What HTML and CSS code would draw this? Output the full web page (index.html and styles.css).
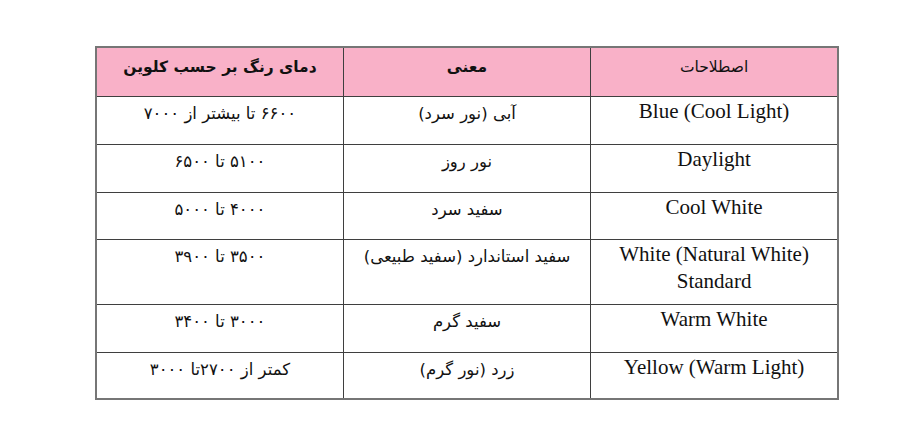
FILE: index.html
```html
<!DOCTYPE html>
<html lang="fa">
<head>
<meta charset="utf-8">
<title>دمای رنگ</title>
<link rel="stylesheet" href="styles.css">
</head>
<body>
<div class="page">
  <table class="grid" dir="rtl">
    <colgroup><col class="c"><col class="c"><col class="c"></colgroup>
    <thead>
      <tr class="head">
        <th class="fa light">اصطلاحات</th>
        <th class="fa">معنی</th>
        <th class="fa">دمای رنگ بر حسب کلوین</th>
      </tr>
    </thead>
    <tbody>
      <tr class="r48">
        <td class="en" dir="ltr">Blue (Cool Light)</td>
        <td class="fa">آبی (نور سرد)</td>
        <td class="fa">۶۶۰۰ تا بیشتر از ۷۰۰۰</td>
      </tr>
      <tr class="r48">
        <td class="en" dir="ltr">Daylight</td>
        <td class="fa">نور روز</td>
        <td class="fa">۵۱۰۰ تا ۶۵۰۰</td>
      </tr>
      <tr class="r47">
        <td class="en" dir="ltr">Cool White</td>
        <td class="fa">سفید سرد</td>
        <td class="fa">۴۰۰۰ تا ۵۰۰۰</td>
      </tr>
      <tr class="tall">
        <td class="en" dir="ltr">White (Natural White)<br>Standard</td>
        <td class="fa">سفید استاندارد (سفید طبیعی)</td>
        <td class="fa">۳۵۰۰ تا ۳۹۰۰</td>
      </tr>
      <tr class="r48">
        <td class="en" dir="ltr">Warm White</td>
        <td class="fa">سفید گرم</td>
        <td class="fa">۳۰۰۰ تا ۳۴۰۰</td>
      </tr>
      <tr class="r47">
        <td class="en" dir="ltr">Yellow (Warm Light)</td>
        <td class="fa">زرد (نور گرم)</td>
        <td class="fa">کمتر از ۲۷۰۰تا ۳۰۰۰</td>
      </tr>
    </tbody>
  </table>
</div>
</body>
</html>
```

FILE: styles.css
```css
html, body {
  margin: 0;
  padding: 0;
  background: #ffffff;
}

.page {
  padding: 46px 0 0 95px;
}

.grid {
  width: 744px;
  border-collapse: collapse;
  table-layout: fixed;
  border: 2px solid #767676;
  color: #111111;
}

.grid .c {
  width: 33.333%;
}

.grid th,
.grid td {
  border: 1px solid #3f3f3f;
  text-align: center;
  vertical-align: top;
  padding: 0 4px;
  box-sizing: border-box;
}

.head th {
  background: #f9b1c8;
  height: 49px;
  padding-top: 7px;
}

.grid tr.r48 td {
  height: 48px;
}

.grid tr.r47 td {
  height: 47px;
}

.grid tr.tall td {
  height: 65px;
}

.fa {
  font-family: "DejaVu Sans", "Noto Sans", sans-serif;
  font-size: 16.5px;
  line-height: 24px;
  padding-top: 10px;
}

th.fa {
  font-size: 15.5px;
  font-weight: bold;
}

th.fa.light {
  font-weight: normal;
}

.grid td.fa {
  padding-top: 5px;
}

.en {
  font-family: "Liberation Serif", "Times New Roman", serif;
  font-size: 21px;
  line-height: 27px;
}

.grid td.en {
  padding-top: 1px;
}
```
